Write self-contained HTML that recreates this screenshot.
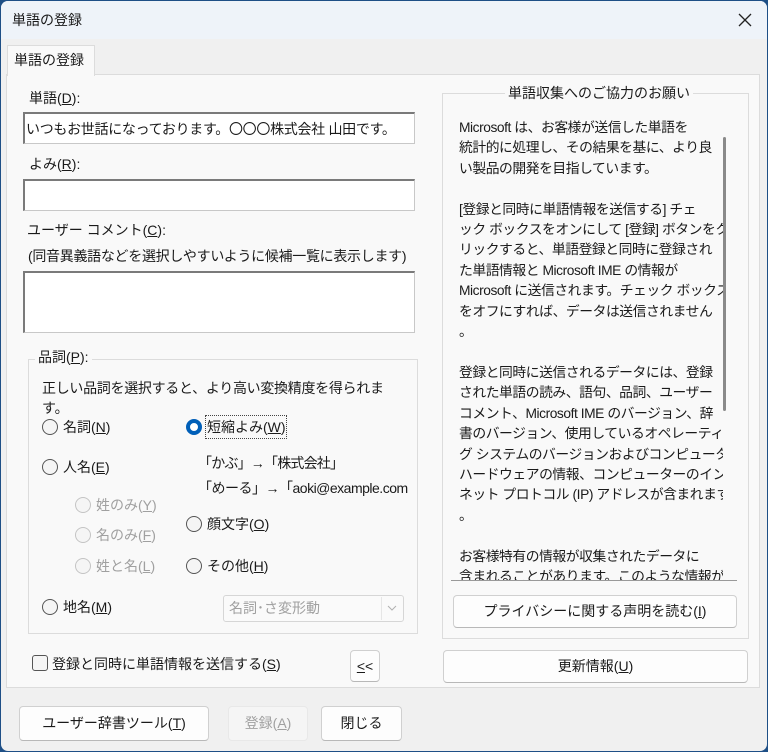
<!DOCTYPE html>
<html><head><meta charset="utf-8"><style>
*{box-sizing:border-box;margin:0;padding:0}
body{width:768px;height:752px;overflow:hidden;font-family:"Liberation Sans","Noto Sans CJK JP",sans-serif;font-size:14px;color:#1a1a1a;background:#1e4f86}
.win{position:absolute;left:1px;top:1px;width:766px;height:750px;background:#f0f0f0;border-radius:7px;overflow:hidden}
.a{position:absolute;white-space:nowrap;line-height:18px}
.title{position:absolute;left:0;top:0;width:766px;height:38px;background:#eef3f9}
.in{position:absolute;background:#fff;border:1px solid #c8c8c8;border-top:2px solid #7a7a7a;border-left:2px solid #7a7a7a}
.btn{position:absolute;background:#fdfdfd;border:1px solid #d0d0d0;border-bottom-color:#b8b8b8;border-radius:4px;text-align:center;font-size:14px}
.r{position:absolute;width:16px;height:16px;border:1px solid #555;border-radius:50%;background:#f5f5f5}
.r.d{border-color:#c4c4c4}
.dis{color:#a0a0a0}
u{text-decoration:underline}
.panel{position:absolute;left:450px;top:110px;width:286px;height:470px;background:#f9f9f9;border-bottom:1px solid #999;overflow:hidden}
.txt{position:absolute;left:8px;top:7px;width:262px;white-space:nowrap;font-size:13.8px;letter-spacing:-0.45px;line-height:20.4px}
</style></head><body><div class="win">
<div class="title"></div>
<div class="a" style="left:11px;top:10px">単語の登録</div>
<svg style="position:absolute;left:737px;top:12px" width="14" height="14"><path d="M1 1L13 13M13 1L1 13" stroke="#222" stroke-width="1.3"/></svg>
<div style="position:absolute;left:5px;top:73px;width:754px;height:614px;background:#f9f9f9;border:1px solid #dcdcdc"></div>
<div style="position:absolute;left:6px;top:44px;width:88px;height:31px;background:#f9f9f9;border:1px solid #dcdcdc;border-bottom:none"></div>
<div class="a" style="left:13px;top:50px">単語の登録</div>

<div class="a" style="left:28px;top:88px">単語(<u>D</u>):</div>
<div class="in" style="left:22px;top:111px;width:392px;height:32px"></div>
<div class="a" style="left:25px;top:119px;letter-spacing:-0.3px">いつもお世話になっております。〇〇〇株式会社 山田です。</div>
<div class="a" style="left:28px;top:154px">よみ(<u>R</u>):</div>
<div class="in" style="left:22px;top:178px;width:392px;height:32px"></div>
<div class="a" style="left:26px;top:220px">ユーザー コメント(<u>C</u>):</div>
<div class="a" style="left:27px;top:246px;letter-spacing:-0.3px">(同音異義語などを選択しやすいように候補一覧に表示します)</div>
<div class="in" style="left:22px;top:270px;width:392px;height:62px"></div>

<div style="position:absolute;left:27px;top:358px;width:390px;height:275px;border:1px solid #dcdcdc"></div>
<div class="a" style="left:34px;top:347px;background:#f9f9f9;padding:0 3px">品詞(<u>P</u>):</div>
<div class="a" style="left:41px;top:378px;letter-spacing:-0.3px">正しい品詞を選択すると、より高い変換精度を得られま</div>
<div class="a" style="left:41px;top:398px">す。</div>
<div class="r" style="left:41px;top:418px"></div><div class="a" style="left:62px;top:417px">名詞(<u>N</u>)</div>
<div class="r" style="left:41px;top:458px"></div><div class="a" style="left:62px;top:457px">人名(<u>E</u>)</div>
<div class="r d" style="left:74px;top:496px"></div><div class="a dis" style="left:95px;top:495px">姓のみ(<u>Y</u>)</div>
<div class="r d" style="left:74px;top:526px"></div><div class="a dis" style="left:95px;top:525px">名のみ(<u>F</u>)</div>
<div class="r d" style="left:74px;top:557px"></div><div class="a dis" style="left:95px;top:556px">姓と名(<u>L</u>)</div>
<div class="r" style="left:41px;top:598px"></div><div class="a" style="left:62px;top:597px">地名(<u>M</u>)</div>
<div class="r" style="left:185px;top:418px;border:4.5px solid #005fb8;background:#fff"></div>
<div style="position:absolute;left:204px;top:414px;width:82px;height:24px;border:1px dotted #444"></div>
<div class="a" style="left:206px;top:417px">短縮よみ(<u>W</u>)</div>
<div class="a" style="left:197px;top:453px;letter-spacing:-0.8px">「かぶ」→「株式会社」</div>
<div class="a" style="left:197px;top:478px;letter-spacing:-0.5px">「めーる」→「aoki@example.com</div>
<div class="r" style="left:185px;top:515px"></div><div class="a" style="left:206px;top:514px">顔文字(<u>O</u>)</div>
<div class="r" style="left:185px;top:557px"></div><div class="a" style="left:206px;top:556px">その他(<u>H</u>)</div>
<div style="position:absolute;left:222px;top:594px;width:181px;height:27px;border:1px solid #d6d6d6;border-radius:3px;background:#fafafa"></div>
<div class="a dis" style="left:228px;top:598px">名詞･さ変形動</div>
<div style="position:absolute;left:380px;top:596px;width:1px;height:23px;background:#e6e6e6"></div>
<svg style="position:absolute;left:386px;top:603px" width="10" height="8"><path d="M1 2L5 6L9 2" stroke="#b0b0b0" fill="none"/></svg>

<div style="position:absolute;left:31px;top:654px;width:16px;height:16px;border:1px solid #555;border-radius:3px;background:#f5f5f5"></div>
<div class="a" style="left:51px;top:654px">登録と同時に単語情報を送信する(<u>S</u>)</div>
<div class="btn" style="left:349px;top:649px;width:30px;height:32px;line-height:30px"><u>&lt;</u>&lt;</div>

<div style="position:absolute;left:441px;top:92px;width:307px;height:546px;border:1px solid #dcdcdc"></div>
<div class="a" style="left:504px;top:83px;background:#f9f9f9;padding:0 3px">単語収集へのご協力のお願い</div>
<div class="panel"><div class="txt">Microsoft は、お客様が送信した単語を<br>統計的に処理し、その結果を基に、より良<br>い製品の開発を目指しています。<br><br>[登録と同時に単語情報を送信する] チェ<br>ック ボックスをオンにして [登録] ボタンをク<br>リックすると、単語登録と同時に登録され<br>た単語情報と Microsoft IME の情報が<br>Microsoft に送信されます。チェック ボックス<br>をオフにすれば、データは送信されません<br>。<br><br>登録と同時に送信されるデータには、登録<br>された単語の読み、語句、品詞、ユーザー<br>コメント、Microsoft IME のバージョン、辞<br>書のバージョン、使用しているオペレーティン<br>グ システムのバージョンおよびコンピューター<br>ハードウェアの情報、コンピューターのインター<br>ネット プロトコル (IP) アドレスが含まれます<br>。<br><br>お客様特有の情報が収集されたデータに<br>含まれることがあります。このような情報が</div>
<div style="position:absolute;left:272px;top:0;width:14px;height:470px;background:#f9f9f9"></div>
<div style="position:absolute;left:272px;top:26px;width:3px;height:274px;background:#8a8a8a;border-radius:2px"></div>
</div>

<div class="btn" style="left:452px;top:594px;width:284px;height:33px;line-height:31px">プライバシーに関する声明を読む(<u>I</u>)</div>
<div class="btn" style="left:442px;top:649px;width:305px;height:33px;line-height:31px">更新情報(<u>U</u>)</div>

<div class="btn" style="left:18px;top:705px;width:190px;height:35px;line-height:33px">ユーザー辞書ツール(<u>T</u>)</div>
<div class="btn dis" style="left:227px;top:705px;width:80px;height:35px;line-height:33px;background:#f5f5f5;border-color:#e8e8e8">登録(<u>A</u>)</div>
<div class="btn" style="left:320px;top:705px;width:81px;height:35px;line-height:33px">閉じる</div>
</div></body></html>
